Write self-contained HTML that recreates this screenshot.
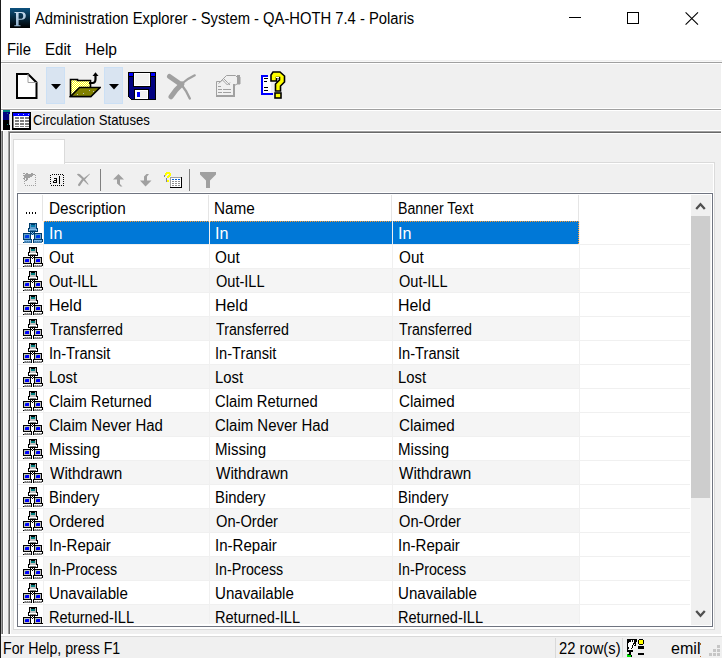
<!DOCTYPE html>
<html><head><meta charset="utf-8">
<style>
*{box-sizing:border-box}
html,body{margin:0;padding:0}
body{width:722px;height:658px;overflow:hidden;position:relative;background:#fff;font-family:"Liberation Sans",sans-serif;color:#000}
.a{position:absolute}
.t{position:absolute;white-space:nowrap;line-height:1;transform-origin:0 0}
svg{display:block}
</style></head><body>
<svg width="0" height="0" style="position:absolute"><defs><g id="net" shape-rendering="crispEdges"><rect x="6" y="0" width="8" height="1" fill="#000"/><rect x="6" y="1" width="1" height="1" fill="#000"/><rect x="7" y="1" width="1" height="1" fill="#c0c0c0"/><rect x="8" y="1" width="4" height="1" fill="#000"/><rect x="12" y="1" width="1" height="1" fill="#c0c0c0"/><rect x="13" y="1" width="1" height="1" fill="#000"/><rect x="6" y="2" width="1" height="1" fill="#000"/><rect x="7" y="2" width="1" height="1" fill="#c0c0c0"/><rect x="8" y="2" width="4" height="1" fill="#008080"/><rect x="12" y="2" width="1" height="1" fill="#c0c0c0"/><rect x="13" y="2" width="1" height="1" fill="#000"/><rect x="6" y="3" width="1" height="1" fill="#000"/><rect x="7" y="3" width="1" height="1" fill="#c0c0c0"/><rect x="8" y="3" width="4" height="1" fill="#008080"/><rect x="12" y="3" width="1" height="1" fill="#c0c0c0"/><rect x="13" y="3" width="1" height="1" fill="#000"/><rect x="6" y="4" width="1" height="1" fill="#000"/><rect x="7" y="4" width="6" height="1" fill="#c0c0c0"/><rect x="13" y="4" width="1" height="1" fill="#000"/><rect x="5" y="5" width="2" height="1" fill="#000"/><rect x="7" y="5" width="6" height="1" fill="#c0c0c0"/><rect x="13" y="5" width="2" height="1" fill="#000"/><rect x="5" y="6" width="1" height="1" fill="#000"/><rect x="6" y="6" width="8" height="1" fill="#fff"/><rect x="14" y="6" width="1" height="1" fill="#000"/><rect x="5" y="7" width="1" height="1" fill="#000"/><rect x="6" y="7" width="1" height="1" fill="#fff"/><rect x="7" y="7" width="6" height="1" fill="#808080"/><rect x="13" y="7" width="1" height="1" fill="#fff"/><rect x="14" y="7" width="1" height="1" fill="#000"/><rect x="5" y="8" width="10" height="1" fill="#000"/><rect x="7" y="9" width="1" height="1" fill="#000"/><rect x="8" y="9" width="1" height="1" fill="#fff"/><rect x="9" y="9" width="1" height="1" fill="#000"/><rect x="10" y="9" width="1" height="1" fill="#fff"/><rect x="11" y="9" width="1" height="1" fill="#000"/><rect x="0" y="10" width="9" height="1" fill="#000"/><rect x="9" y="10" width="1" height="1" fill="#fff"/><rect x="10" y="10" width="9" height="1" fill="#000"/><rect x="0" y="11" width="1" height="1" fill="#000"/><rect x="1" y="11" width="6" height="1" fill="#c0c0c0"/><rect x="7" y="11" width="1" height="1" fill="#000"/><rect x="8" y="11" width="1" height="1" fill="#fff"/><rect x="9" y="11" width="1" height="1" fill="#000"/><rect x="10" y="11" width="1" height="1" fill="#fff"/><rect x="11" y="11" width="1" height="1" fill="#000"/><rect x="12" y="11" width="6" height="1" fill="#c0c0c0"/><rect x="18" y="11" width="1" height="1" fill="#000"/><rect x="0" y="12" width="1" height="1" fill="#000"/><rect x="1" y="12" width="1" height="1" fill="#c0c0c0"/><rect x="2" y="12" width="1" height="1" fill="#008080"/><rect x="3" y="12" width="3" height="1" fill="#0000ff"/><rect x="6" y="12" width="1" height="1" fill="#c0c0c0"/><rect x="7" y="12" width="1" height="1" fill="#000"/><rect x="11" y="12" width="1" height="1" fill="#000"/><rect x="12" y="12" width="1" height="1" fill="#c0c0c0"/><rect x="13" y="12" width="1" height="1" fill="#008080"/><rect x="14" y="12" width="3" height="1" fill="#0000ff"/><rect x="17" y="12" width="1" height="1" fill="#c0c0c0"/><rect x="18" y="12" width="1" height="1" fill="#000"/><rect x="0" y="13" width="1" height="1" fill="#000"/><rect x="1" y="13" width="1" height="1" fill="#c0c0c0"/><rect x="2" y="13" width="4" height="1" fill="#0000ff"/><rect x="6" y="13" width="1" height="1" fill="#c0c0c0"/><rect x="7" y="13" width="1" height="1" fill="#000"/><rect x="11" y="13" width="1" height="1" fill="#000"/><rect x="12" y="13" width="1" height="1" fill="#c0c0c0"/><rect x="13" y="13" width="4" height="1" fill="#0000ff"/><rect x="17" y="13" width="1" height="1" fill="#c0c0c0"/><rect x="18" y="13" width="1" height="1" fill="#000"/><rect x="0" y="14" width="1" height="1" fill="#000"/><rect x="1" y="14" width="1" height="1" fill="#c0c0c0"/><rect x="2" y="14" width="4" height="1" fill="#0000ff"/><rect x="6" y="14" width="1" height="1" fill="#c0c0c0"/><rect x="7" y="14" width="1" height="1" fill="#000"/><rect x="11" y="14" width="1" height="1" fill="#000"/><rect x="12" y="14" width="1" height="1" fill="#c0c0c0"/><rect x="13" y="14" width="4" height="1" fill="#0000ff"/><rect x="17" y="14" width="1" height="1" fill="#c0c0c0"/><rect x="18" y="14" width="1" height="1" fill="#000"/><rect x="0" y="15" width="1" height="1" fill="#000"/><rect x="1" y="15" width="6" height="1" fill="#c0c0c0"/><rect x="7" y="15" width="1" height="1" fill="#000"/><rect x="11" y="15" width="1" height="1" fill="#000"/><rect x="12" y="15" width="6" height="1" fill="#c0c0c0"/><rect x="18" y="15" width="1" height="1" fill="#000"/><rect x="0" y="16" width="9" height="1" fill="#000"/><rect x="10" y="16" width="10" height="1" fill="#000"/><rect x="1" y="17" width="7" height="1" fill="#fff"/><rect x="8" y="17" width="1" height="1" fill="#000"/><rect x="10" y="17" width="1" height="1" fill="#000"/><rect x="11" y="17" width="8" height="1" fill="#fff"/><rect x="19" y="17" width="1" height="1" fill="#000"/><rect x="1" y="18" width="1" height="1" fill="#c0c0c0"/><rect x="2" y="18" width="1" height="1" fill="#808080"/><rect x="3" y="18" width="1" height="1" fill="#c0c0c0"/><rect x="4" y="18" width="1" height="1" fill="#808080"/><rect x="5" y="18" width="1" height="1" fill="#c0c0c0"/><rect x="6" y="18" width="1" height="1" fill="#808080"/><rect x="7" y="18" width="1" height="1" fill="#c0c0c0"/><rect x="8" y="18" width="1" height="1" fill="#000"/><rect x="10" y="18" width="1" height="1" fill="#000"/><rect x="11" y="18" width="1" height="1" fill="#c0c0c0"/><rect x="12" y="18" width="1" height="1" fill="#808080"/><rect x="13" y="18" width="1" height="1" fill="#c0c0c0"/><rect x="14" y="18" width="1" height="1" fill="#808080"/><rect x="15" y="18" width="1" height="1" fill="#c0c0c0"/><rect x="16" y="18" width="1" height="1" fill="#808080"/><rect x="17" y="18" width="1" height="1" fill="#c0c0c0"/><rect x="18" y="18" width="1" height="1" fill="#808080"/><rect x="19" y="18" width="1" height="1" fill="#000"/><rect x="0" y="19" width="1" height="1" fill="#000"/><rect x="1" y="19" width="7" height="1" fill="#808080"/><rect x="8" y="19" width="1" height="1" fill="#000"/><rect x="10" y="19" width="1" height="1" fill="#000"/><rect x="11" y="19" width="8" height="1" fill="#808080"/></g></defs></svg>
<div class="a" style="left:0px;top:0px;width:1px;height:658px;background:#1a1a1a"></div>
<svg class="a" style="left:10px;top:8px" width="20" height="20" viewBox="0 0 20 20"><defs><linearGradient id="pg" x1="0" y1="0" x2="0" y2="1"><stop offset="0" stop-color="#0d527f"/><stop offset="1" stop-color="#000"/></linearGradient><linearGradient id="pl" x1="0" y1="0" x2="0" y2="1"><stop offset="0" stop-color="#c8dcef"/><stop offset="1" stop-color="#8fb0cc"/></linearGradient></defs><rect width="20" height="20" fill="url(#pg)"/><path d="M4.5 4H11.5C14.5 4 15.8 5.5 15.8 7.8C15.8 10.2 14.2 11.8 11.3 11.8H8.6V17.2H10.5V18.2H4.3V17.2H6V5H4.5Z M8.6 5V10.8H10.8C12.5 10.8 13.2 9.6 13.2 7.9C13.2 6.2 12.5 5 10.8 5Z" fill="url(#pl)" fill-rule="evenodd"/></svg>
<div class="t" style="left:35.17px;top:11px;font-size:16px;color:#000;transform:scaleX(0.9228);">Administration Explorer - System - QA-HOTH 7.4 - Polaris</div>
<div class="a" style="left:569px;top:17px;width:12px;height:1px;background:#000"></div>
<div class="a" style="left:627px;top:12px;width:12px;height:12px;border:1px solid #000"></div>
<svg class="a" style="left:685px;top:12px" width="14" height="13" viewBox="0 0 14 13"><path d="M0.6 0.4L13 12.6M13 0.4L0.6 12.6" stroke="#000" stroke-width="1.1" fill="none"/></svg>
<div class="t" style="left:7.38px;top:42px;font-size:16px;color:#000;transform:scaleX(0.9260);">File</div>
<div class="t" style="left:44.66px;top:42px;font-size:16px;color:#000;transform:scaleX(0.9449);">Edit</div>
<div class="t" style="left:84.82px;top:42px;font-size:16px;color:#000;transform:scaleX(0.9734);">Help</div>
<div class="a" style="left:2px;top:60px;width:720px;height:1px;background:#f0f0f0"></div>
<div class="a" style="left:2px;top:61px;width:720px;height:1px;background:#f8f8f8"></div>
<div class="a" style="left:1px;top:62px;width:721px;height:1px;background:#a0a0a0"></div>
<div class="a" style="left:1px;top:63px;width:721px;height:1px;background:#fff"></div>
<div class="a" style="left:2px;top:64px;width:720px;height:44px;background:#f0f0f0"></div>
<div class="a" style="left:1px;top:64px;width:1px;height:45px;background:#fff"></div>
<div class="a" style="left:1px;top:108px;width:721px;height:1px;background:#fff"></div>
<div class="a" style="left:1px;top:109px;width:721px;height:1px;background:#a0a0a0"></div>
<svg class="a" style="left:16px;top:73px" width="22" height="26" viewBox="0 0 22 26" shape-rendering="crispEdges"><path d="M1 1H12L20.5 9.5V25H1Z" fill="#fff" stroke="#000" stroke-width="2" shape-rendering="geometricPrecision"/><path d="M12 1V9.5H20.5" fill="none" stroke="#a0a0a0" stroke-width="1" shape-rendering="geometricPrecision"/></svg>
<div class="a" style="left:46px;top:67px;width:19px;height:37px;background:#d9e4f1;border:1px solid #cce0f5"></div>
<svg class="a" style="left:51px;top:84px" width="10" height="6" viewBox="0 0 10 6"><path d="M0 0H10L5 5.5Z" fill="#000"/></svg>
<div class="a" style="left:104px;top:67px;width:19px;height:37px;background:#d9e4f1;border:1px solid #cce0f5"></div>
<svg class="a" style="left:109px;top:84px" width="10" height="6" viewBox="0 0 10 6"><path d="M0 0H10L5 5.5Z" fill="#000"/></svg>
<svg class="a" style="left:69px;top:71px" width="32" height="27" viewBox="0 0 32 27" shape-rendering="crispEdges"><defs><pattern id="chk" width="2" height="2" patternUnits="userSpaceOnUse"><rect width="2" height="2" fill="#ffff00"/><rect width="1" height="1" fill="#fff"/><rect x="1" y="1" width="1" height="1" fill="#fff"/></pattern></defs><path d="M1.5 25.5V8.5H8.5V9.5H21.5V25.5Z" fill="url(#chk)" stroke="#000" stroke-width="1.6" shape-rendering="geometricPrecision"/><path d="M1.5 25.5L10.5 16.5H31L22 25.5Z" fill="#808000" stroke="#000" stroke-width="1.6" shape-rendering="geometricPrecision"/><path d="M20 12H23.5Q26.5 12 26.5 8V3" fill="none" stroke="#000" stroke-width="2.2" shape-rendering="geometricPrecision"/><path d="M23.5 5L26.5 1.2L29.5 5Z" fill="#000" shape-rendering="geometricPrecision"/><rect x="14" y="22" width="1" height="1" fill="#c0c0c0"/><rect x="20" y="19" width="1" height="1" fill="#c0c0c0"/><rect x="8" y="23" width="1" height="1" fill="#c0c0c0"/><rect x="24" y="20" width="1" height="1" fill="#c0c0c0"/></svg>
<svg class="a" style="left:128px;top:72px" width="28" height="28" viewBox="0 0 28 28" shape-rendering="crispEdges"><path d="M0 0H28V28H3L0 25Z" fill="#000"/><path d="M1 1H27V27H3.5L1 24.5Z" fill="#000080"/><rect x="1" y="1" width="4" height="3" fill="#0000ff"/><rect x="23" y="1" width="4" height="3" fill="#0000ff"/><rect x="1" y="4" width="4" height="1" fill="#000"/><rect x="23" y="4" width="4" height="1" fill="#000"/><rect x="5" y="1" width="18" height="14" fill="#000"/><rect x="6" y="1" width="16" height="13" fill="#fff"/><rect x="7" y="2" width="14" height="11" fill="#f0f0f0"/><rect x="6" y="17" width="15" height="11" fill="#000"/><rect x="7" y="18" width="13" height="9" fill="#fff"/><rect x="9" y="20" width="3" height="5" fill="#0000ff"/><rect x="12" y="19" width="7" height="7" fill="#f0f0f0"/></svg>
<svg class="a" style="left:160px;top:68px" width="40" height="36" viewBox="160 68 40 36" fill="none" stroke="#a0a0a0" stroke-linecap="round"><path d="M169.5 76.5L181 84.5" stroke-width="5"/><path d="M181 84L186 91L189.8 98.5" stroke-width="2.4"/><path d="M194.8 75.3L188 79L181.5 84" stroke-width="2.2"/><path d="M182 84L176 90L171 96.8" stroke-width="5"/></svg>
<svg class="a" style="left:215px;top:74px" width="26" height="24" viewBox="0 0 26 24" shape-rendering="crispEdges"><path d="M1.5 7.5H5.5L11.5 1.5H20.5L22 3H25V10H22L19.5 11.5H18.5V22.5H1.5Z" fill="#f0f0f0" stroke="#a0a0a0" stroke-width="1" shape-rendering="geometricPrecision"/><rect x="18" y="10" width="2" height="13" fill="#a0a0a0"/><rect x="1" y="21" width="19" height="2" fill="#a0a0a0"/><rect x="22" y="1" width="3" height="9" fill="#a0a0a0"/><path d="M3.5 9.5L7.5 6L10 8.5L12.5 11L15 8.5M9 5L12.5 8.5L15 11" fill="none" stroke="#a0a0a0" stroke-width="1" shape-rendering="geometricPrecision"/><rect x="3" y="12" width="3" height="1" fill="#a0a0a0"/><rect x="3" y="15" width="4" height="1" fill="#a0a0a0"/><rect x="8" y="15" width="8" height="1" fill="#a0a0a0"/><rect x="3" y="18" width="4" height="1" fill="#a0a0a0"/><rect x="8" y="18" width="8" height="1" fill="#a0a0a0"/></svg>
<svg class="a" style="left:260px;top:71px" width="28" height="29" viewBox="0 0 28 29" shape-rendering="crispEdges"><rect x="1" y="4" width="2" height="20" fill="#0000ff"/><rect x="1" y="4" width="7" height="2" fill="#0000ff"/><rect x="1" y="22" width="12" height="2" fill="#0000ff"/><rect x="3" y="6" width="8" height="16" fill="#fff"/><rect x="4" y="7" width="4" height="1" fill="#000"/><rect x="4" y="10" width="3" height="1" fill="#000"/><rect x="4" y="16" width="4" height="1" fill="#000"/><rect x="4" y="19" width="4" height="1" fill="#000"/><path d="M13 1H20L24.5 5V11L20.5 15V20H15.5V13L19.5 9V6.5H16.5V10H11V4Z" fill="#ffff00" stroke="#000" stroke-width="1.6" shape-rendering="geometricPrecision"/><path d="M16 7L19 6" stroke="#fff" stroke-width="1" /><rect x="15" y="22" width="6" height="5" fill="#ffff00" stroke="#000" stroke-width="1.6" shape-rendering="geometricPrecision"/></svg>
<div class="a" style="left:1px;top:110px;width:721px;height:21px;background:#f0f0f0"></div>
<div class="a" style="left:1px;top:110px;width:721px;height:1px;background:#fff"></div>
<svg class="a" style="left:3px;top:110px" width="8" height="20" viewBox="0 0 8 20" shape-rendering="crispEdges"><rect width="7" height="20" fill="#000"/><rect x="0" y="0" width="7" height="2" fill="#008080"/><rect x="0" y="2" width="7" height="8" fill="#000080"/><rect x="4" y="3" width="1" height="1" fill="#008080"/><rect x="4" y="14" width="1" height="1" fill="#008080"/><rect x="6" y="4" width="1" height="11" fill="#c0c0c0"/></svg>
<svg class="a" style="left:12px;top:112px" width="19" height="18" viewBox="0 0 19 18" shape-rendering="crispEdges"><rect width="19" height="18" fill="#000"/><rect x="1" y="1" width="17" height="3" fill="#0000ff"/><rect x="6" y="2" width="1" height="1" fill="#c0c0ff"/><rect x="11" y="2" width="1" height="1" fill="#c0c0ff"/><rect x="16" y="2" width="1" height="1" fill="#c0c0ff"/><rect x="1" y="4" width="1" height="12" fill="#808080"/><rect x="2" y="4" width="15" height="12" fill="#fff"/><rect x="3" y="5" width="4" height="2" fill="#808080"/><rect x="8" y="5" width="4" height="2" fill="#808080"/><rect x="13" y="5" width="4" height="2" fill="#808080"/><rect x="3" y="8" width="4" height="2" fill="#808080"/><rect x="8" y="8" width="4" height="2" fill="#808080"/><rect x="13" y="8" width="4" height="2" fill="#808080"/><rect x="3" y="11" width="4" height="2" fill="#808080"/><rect x="8" y="11" width="4" height="2" fill="#808080"/><rect x="13" y="11" width="4" height="2" fill="#808080"/><rect x="3" y="14" width="4" height="1" fill="#808080"/><rect x="8" y="14" width="4" height="1" fill="#808080"/><rect x="13" y="14" width="4" height="1" fill="#808080"/></svg>
<div class="t" style="left:32.63px;top:112px;font-size:15px;color:#000;transform:scaleX(0.8759);">Circulation Statuses</div>
<div class="a" style="left:1px;top:130px;width:721px;height:1px;background:#fff"></div>
<div class="a" style="left:1px;top:131px;width:721px;height:505px;background:#f0f0f0"></div>
<div class="a" style="left:1px;top:131px;width:1px;height:503px;background:#a0a0a0"></div>
<div class="a" style="left:2px;top:131px;width:1px;height:503px;background:#696969"></div>
<div class="a" style="left:3px;top:131px;width:1px;height:503px;background:#fff"></div>
<div class="a" style="left:8px;top:131px;width:713px;height:1px;background:#a0a0a0"></div>
<div class="a" style="left:8px;top:131px;width:1px;height:503px;background:#a0a0a0"></div>
<div class="a" style="left:9px;top:132px;width:712px;height:1px;background:#696969"></div>
<div class="a" style="left:9px;top:132px;width:1px;height:502px;background:#696969"></div>
<div class="a" style="left:10px;top:133px;width:711px;height:1px;background:#fff"></div>
<div class="a" style="left:10px;top:133px;width:1px;height:501px;background:#fff"></div>
<div class="a" style="left:721px;top:63px;width:1px;height:573px;background:#fff"></div>
<div class="a" style="left:13px;top:162px;width:702px;height:468px;background:#fff;border:1px solid #dadada"></div>
<div class="a" style="left:13px;top:139px;width:52px;height:25px;background:#fff;border:1px solid #dadada;border-bottom:none"></div>
<div class="a" style="left:17px;top:164px;width:696px;height:28px;background:#f0f0f0"></div>
<div class="a" style="left:100px;top:169px;width:1px;height:22px;background:#808080"></div>
<div class="a" style="left:189px;top:169px;width:1px;height:22px;background:#808080"></div>
<svg class="a" style="left:0;top:0" width="40" height="192" shape-rendering="crispEdges"><rect x="24" y="179" width="1" height="1" fill="#a0a0a0"/><rect x="24" y="181" width="1" height="1" fill="#a0a0a0"/><rect x="24" y="183" width="1" height="1" fill="#a0a0a0"/><rect x="25" y="185" width="1" height="1" fill="#a0a0a0"/><rect x="27" y="185" width="1" height="1" fill="#a0a0a0"/><rect x="29" y="185" width="1" height="1" fill="#a0a0a0"/><rect x="31" y="185" width="1" height="1" fill="#a0a0a0"/><rect x="33" y="185" width="1" height="1" fill="#a0a0a0"/><rect x="35" y="185" width="1" height="1" fill="#a0a0a0"/><rect x="35" y="175" width="1" height="1" fill="#a0a0a0"/><rect x="35" y="177" width="1" height="1" fill="#a0a0a0"/><rect x="35" y="179" width="1" height="1" fill="#a0a0a0"/><rect x="35" y="181" width="1" height="1" fill="#a0a0a0"/><rect x="35" y="183" width="1" height="1" fill="#a0a0a0"/><rect x="33" y="174" width="1" height="1" fill="#a0a0a0"/><rect x="34" y="174" width="1" height="1" fill="#a0a0a0"/><rect x="32" y="174" width="1" height="1" fill="#a0a0a0"/><path d="M23 173H25V174H26V173H28V174H31V173H33V176H32V177H30V178H28V180H27V181H25V180H26V178H25V179H23V178H24V176H23V175H25V174H23Z" fill="#a0a0a0"/></svg>
<svg class="a" style="left:0;top:0" width="70" height="192" shape-rendering="crispEdges"><rect x="52" y="174" width="1" height="1" fill="#000"/><rect x="54" y="174" width="1" height="1" fill="#000"/><rect x="56" y="174" width="1" height="1" fill="#000"/><rect x="58" y="174" width="1" height="1" fill="#000"/><rect x="60" y="174" width="1" height="1" fill="#000"/><rect x="62" y="174" width="1" height="1" fill="#000"/><rect x="50" y="175" width="1" height="1" fill="#000"/><rect x="50" y="177" width="1" height="1" fill="#000"/><rect x="50" y="179" width="1" height="1" fill="#000"/><rect x="50" y="181" width="1" height="1" fill="#000"/><rect x="50" y="183" width="1" height="1" fill="#000"/><rect x="51" y="185" width="1" height="1" fill="#000"/><rect x="53" y="185" width="1" height="1" fill="#000"/><rect x="55" y="185" width="1" height="1" fill="#000"/><rect x="57" y="185" width="1" height="1" fill="#000"/><rect x="59" y="185" width="1" height="1" fill="#000"/><rect x="61" y="185" width="1" height="1" fill="#000"/><rect x="63" y="185" width="1" height="1" fill="#000"/><rect x="63" y="175" width="1" height="1" fill="#000"/><rect x="63" y="177" width="1" height="1" fill="#000"/><rect x="63" y="179" width="1" height="1" fill="#000"/><rect x="63" y="181" width="1" height="1" fill="#000"/><rect x="63" y="183" width="1" height="1" fill="#000"/><rect x="54" y="178" width="3" height="1" fill="#000"/><rect x="56" y="179" width="1" height="4" fill="#000"/><rect x="54" y="180" width="3" height="1" fill="#000"/><rect x="53" y="181" width="1" height="2" fill="#000"/><rect x="54" y="182" width="3" height="1" fill="#000"/><rect x="59" y="176" width="1" height="8" fill="#000"/></svg>
<svg class="a" style="left:0;top:0" width="100" height="192"><path d="M77 174.5Q77 173.5 78.5 173.7L80 174.2L84 178L89.5 173.7L90 174L85 179.5L88.6 184.3L88 184.8L83.5 180.5L80 185.8Q79 186.5 78.3 185.8L78 184.5L82 179L78 175.5Z" fill="#a0a0a0"/></svg>
<svg class="a" style="left:0;top:0" width="130" height="192" shape-rendering="crispEdges"><path d="M118.5 174L124 179.5H120V184L122.5 186.5H120.5L117 183.5V179.5H113Z" fill="#a0a0a0" shape-rendering="geometricPrecision"/></svg>
<svg class="a" style="left:0;top:0" width="160" height="192"><path d="M145.5 186.5L151.5 180.5H147V176.5L149 174H146.5L144 176.5V180.5H140Z" fill="#a0a0a0"/></svg>
<svg class="a" style="left:0;top:0" width="190" height="192" shape-rendering="crispEdges"><rect x="170" y="177" width="12" height="11" fill="#000"/><rect x="170" y="177" width="11" height="10" fill="#a0a0a0"/><rect x="171" y="178" width="10" height="9" fill="#fff"/><rect x="172" y="179" width="2" height="1" fill="#0a64d8"/><rect x="175" y="179" width="2" height="1" fill="#0a64d8"/><rect x="178" y="179" width="2" height="1" fill="#0a64d8"/><rect x="172" y="181" width="2" height="1" fill="#909090"/><rect x="175" y="181" width="2" height="1" fill="#909090"/><rect x="178" y="181" width="2" height="1" fill="#909090"/><rect x="172" y="183" width="2" height="1" fill="#909090"/><rect x="175" y="183" width="2" height="1" fill="#909090"/><rect x="178" y="183" width="2" height="1" fill="#909090"/><rect x="172" y="185" width="2" height="1" fill="#909090"/><rect x="175" y="185" width="2" height="1" fill="#909090"/><rect x="178" y="185" width="2" height="1" fill="#909090"/><path d="M164 175H165V173H166V172H170V173H171V176H170V177H169V178H167V176H168V175H169V174H167V175H166V176H164Z" fill="#ffff00"/><rect x="164" y="175" width="1" height="2" fill="#8080a0"/><rect x="166" y="178" width="1" height="2" fill="#8080a0"/><rect x="167" y="180" width="2" height="2" fill="#ffff00"/><rect x="166" y="180" width="1" height="2" fill="#8080a0"/></svg>
<svg class="a" style="left:0;top:0" width="220" height="192"><path d="M200 172H216V174.5L210 180.5V188H206V180.5L200 174.5Z" fill="#a0a0a0"/></svg>
<div class="a" style="left:17px;top:193px;width:696px;height:434px;background:#fff;border:1px solid #6f7480"></div>
<div class="a" style="left:42px;top:195px;width:1px;height:26px;background:#e5e5e5"></div>
<div class="a" style="left:208px;top:195px;width:1px;height:26px;background:#e5e5e5"></div>
<div class="a" style="left:391px;top:195px;width:1px;height:26px;background:#e5e5e5"></div>
<div class="a" style="left:578px;top:195px;width:1px;height:26px;background:#e5e5e5"></div>
<div class="a" style="left:26px;top:212px;width:1px;height:2px;background:#000"></div>
<div class="a" style="left:29px;top:212px;width:1px;height:2px;background:#000"></div>
<div class="a" style="left:32px;top:212px;width:1px;height:2px;background:#000"></div>
<div class="a" style="left:35px;top:212px;width:1px;height:2px;background:#000"></div>
<div class="t" style="left:48.74px;top:201px;font-size:16px;color:#000;transform:scaleX(0.9578);">Description</div>
<div class="t" style="left:214.44px;top:201px;font-size:16px;color:#000;transform:scaleX(0.9568);">Name</div>
<div class="t" style="left:398.14px;top:201px;font-size:16px;color:#000;transform:scaleX(0.8854);">Banner Text</div>
<div class="a" style="left:18px;top:194px;width:673px;height:430px;overflow:hidden"><div class="a" style="left:-18px;top:-194px;width:722px;height:658px">
<div class="a" style="left:44px;top:221px;width:535px;height:23px;background:#0078d7"></div>
<div class="a" style="left:44px;top:221px;width:535px;height:1px;border-top:1px dotted #ff9a2e"></div>
<div class="a" style="left:578px;top:221px;width:1px;height:23px;border-left:1px dotted #ff9a2e"></div>
<svg class="a" style="left:23px;top:223px" width="20" height="20" viewBox="0 0 20 20" shape-rendering="crispEdges"><rect x="6" y="0" width="8" height="1" fill="#003c6c"/><rect x="6" y="1" width="1" height="1" fill="#003c6c"/><rect x="7" y="1" width="1" height="1" fill="#609ccc"/><rect x="8" y="1" width="4" height="1" fill="#003c6c"/><rect x="12" y="1" width="1" height="1" fill="#609ccc"/><rect x="13" y="1" width="1" height="1" fill="#003c6c"/><rect x="6" y="2" width="1" height="1" fill="#003c6c"/><rect x="7" y="2" width="1" height="1" fill="#609ccc"/><rect x="8" y="2" width="4" height="1" fill="#007cac"/><rect x="12" y="2" width="1" height="1" fill="#609ccc"/><rect x="13" y="2" width="1" height="1" fill="#003c6c"/><rect x="6" y="3" width="1" height="1" fill="#003c6c"/><rect x="7" y="3" width="1" height="1" fill="#609ccc"/><rect x="8" y="3" width="4" height="1" fill="#007cac"/><rect x="12" y="3" width="1" height="1" fill="#609ccc"/><rect x="13" y="3" width="1" height="1" fill="#003c6c"/><rect x="6" y="4" width="1" height="1" fill="#003c6c"/><rect x="7" y="4" width="6" height="1" fill="#609ccc"/><rect x="13" y="4" width="1" height="1" fill="#003c6c"/><rect x="5" y="5" width="2" height="1" fill="#003c6c"/><rect x="7" y="5" width="6" height="1" fill="#609ccc"/><rect x="13" y="5" width="2" height="1" fill="#003c6c"/><rect x="5" y="6" width="1" height="1" fill="#003c6c"/><rect x="6" y="6" width="8" height="1" fill="#80bceb"/><rect x="14" y="6" width="1" height="1" fill="#003c6c"/><rect x="5" y="7" width="1" height="1" fill="#003c6c"/><rect x="6" y="7" width="1" height="1" fill="#80bceb"/><rect x="7" y="7" width="6" height="1" fill="#407cac"/><rect x="13" y="7" width="1" height="1" fill="#80bceb"/><rect x="14" y="7" width="1" height="1" fill="#003c6c"/><rect x="5" y="8" width="10" height="1" fill="#003c6c"/><rect x="7" y="9" width="1" height="1" fill="#003c6c"/><rect x="8" y="9" width="1" height="1" fill="#80bceb"/><rect x="9" y="9" width="1" height="1" fill="#003c6c"/><rect x="10" y="9" width="1" height="1" fill="#80bceb"/><rect x="11" y="9" width="1" height="1" fill="#003c6c"/><rect x="0" y="10" width="9" height="1" fill="#003c6c"/><rect x="9" y="10" width="1" height="1" fill="#80bceb"/><rect x="10" y="10" width="9" height="1" fill="#003c6c"/><rect x="0" y="11" width="1" height="1" fill="#003c6c"/><rect x="1" y="11" width="6" height="1" fill="#609ccc"/><rect x="7" y="11" width="1" height="1" fill="#003c6c"/><rect x="8" y="11" width="1" height="1" fill="#80bceb"/><rect x="9" y="11" width="1" height="1" fill="#003c6c"/><rect x="10" y="11" width="1" height="1" fill="#80bceb"/><rect x="11" y="11" width="1" height="1" fill="#003c6c"/><rect x="12" y="11" width="6" height="1" fill="#609ccc"/><rect x="18" y="11" width="1" height="1" fill="#003c6c"/><rect x="0" y="12" width="1" height="1" fill="#003c6c"/><rect x="1" y="12" width="1" height="1" fill="#609ccc"/><rect x="2" y="12" width="1" height="1" fill="#007cac"/><rect x="3" y="12" width="3" height="1" fill="#003ceb"/><rect x="6" y="12" width="1" height="1" fill="#609ccc"/><rect x="7" y="12" width="1" height="1" fill="#003c6c"/><rect x="11" y="12" width="1" height="1" fill="#003c6c"/><rect x="12" y="12" width="1" height="1" fill="#609ccc"/><rect x="13" y="12" width="1" height="1" fill="#007cac"/><rect x="14" y="12" width="3" height="1" fill="#003ceb"/><rect x="17" y="12" width="1" height="1" fill="#609ccc"/><rect x="18" y="12" width="1" height="1" fill="#003c6c"/><rect x="0" y="13" width="1" height="1" fill="#003c6c"/><rect x="1" y="13" width="1" height="1" fill="#609ccc"/><rect x="2" y="13" width="4" height="1" fill="#003ceb"/><rect x="6" y="13" width="1" height="1" fill="#609ccc"/><rect x="7" y="13" width="1" height="1" fill="#003c6c"/><rect x="11" y="13" width="1" height="1" fill="#003c6c"/><rect x="12" y="13" width="1" height="1" fill="#609ccc"/><rect x="13" y="13" width="4" height="1" fill="#003ceb"/><rect x="17" y="13" width="1" height="1" fill="#609ccc"/><rect x="18" y="13" width="1" height="1" fill="#003c6c"/><rect x="0" y="14" width="1" height="1" fill="#003c6c"/><rect x="1" y="14" width="1" height="1" fill="#609ccc"/><rect x="2" y="14" width="4" height="1" fill="#003ceb"/><rect x="6" y="14" width="1" height="1" fill="#609ccc"/><rect x="7" y="14" width="1" height="1" fill="#003c6c"/><rect x="11" y="14" width="1" height="1" fill="#003c6c"/><rect x="12" y="14" width="1" height="1" fill="#609ccc"/><rect x="13" y="14" width="4" height="1" fill="#003ceb"/><rect x="17" y="14" width="1" height="1" fill="#609ccc"/><rect x="18" y="14" width="1" height="1" fill="#003c6c"/><rect x="0" y="15" width="1" height="1" fill="#003c6c"/><rect x="1" y="15" width="6" height="1" fill="#609ccc"/><rect x="7" y="15" width="1" height="1" fill="#003c6c"/><rect x="11" y="15" width="1" height="1" fill="#003c6c"/><rect x="12" y="15" width="6" height="1" fill="#609ccc"/><rect x="18" y="15" width="1" height="1" fill="#003c6c"/><rect x="0" y="16" width="9" height="1" fill="#003c6c"/><rect x="10" y="16" width="10" height="1" fill="#003c6c"/><rect x="1" y="17" width="7" height="1" fill="#80bceb"/><rect x="8" y="17" width="1" height="1" fill="#003c6c"/><rect x="10" y="17" width="1" height="1" fill="#003c6c"/><rect x="11" y="17" width="8" height="1" fill="#80bceb"/><rect x="19" y="17" width="1" height="1" fill="#003c6c"/><rect x="1" y="18" width="1" height="1" fill="#609ccc"/><rect x="2" y="18" width="1" height="1" fill="#407cac"/><rect x="3" y="18" width="1" height="1" fill="#609ccc"/><rect x="4" y="18" width="1" height="1" fill="#407cac"/><rect x="5" y="18" width="1" height="1" fill="#609ccc"/><rect x="6" y="18" width="1" height="1" fill="#407cac"/><rect x="7" y="18" width="1" height="1" fill="#609ccc"/><rect x="8" y="18" width="1" height="1" fill="#003c6c"/><rect x="10" y="18" width="1" height="1" fill="#003c6c"/><rect x="11" y="18" width="1" height="1" fill="#609ccc"/><rect x="12" y="18" width="1" height="1" fill="#407cac"/><rect x="13" y="18" width="1" height="1" fill="#609ccc"/><rect x="14" y="18" width="1" height="1" fill="#407cac"/><rect x="15" y="18" width="1" height="1" fill="#609ccc"/><rect x="16" y="18" width="1" height="1" fill="#407cac"/><rect x="17" y="18" width="1" height="1" fill="#609ccc"/><rect x="18" y="18" width="1" height="1" fill="#407cac"/><rect x="19" y="18" width="1" height="1" fill="#003c6c"/><rect x="0" y="19" width="1" height="1" fill="#003c6c"/><rect x="1" y="19" width="7" height="1" fill="#407cac"/><rect x="8" y="19" width="1" height="1" fill="#003c6c"/><rect x="10" y="19" width="1" height="1" fill="#003c6c"/><rect x="11" y="19" width="8" height="1" fill="#407cac"/></svg>
<div class="t" style="left:48.51px;top:226px;font-size:16px;color:#fff;transform:scaleX(1.0066);">In</div>
<div class="t" style="left:214.71px;top:226px;font-size:16px;color:#fff;transform:scaleX(1.0066);">In</div>
<div class="t" style="left:398.01px;top:226px;font-size:16px;color:#fff;transform:scaleX(1.0066);">In</div>
<div class="a" style="left:18px;top:244px;width:672px;height:1px;background:#f0f0f0"></div>
<svg class="a" style="left:23px;top:247px" width="20" height="20" viewBox="0 0 20 20" shape-rendering="crispEdges"><use href="#net"/></svg>
<div class="t" style="left:49.28px;top:250px;font-size:16px;color:#000;transform:scaleX(0.9553);">Out</div>
<div class="t" style="left:215.48px;top:250px;font-size:16px;color:#000;transform:scaleX(0.9553);">Out</div>
<div class="t" style="left:398.78px;top:250px;font-size:16px;color:#000;transform:scaleX(0.9553);">Out</div>
<div class="a" style="left:43px;top:268px;width:536px;height:24px;background:#f5f5f5"></div>
<div class="a" style="left:18px;top:268px;width:672px;height:1px;background:#f0f0f0"></div>
<svg class="a" style="left:23px;top:271px" width="20" height="20" viewBox="0 0 20 20" shape-rendering="crispEdges"><use href="#net"/></svg>
<div class="t" style="left:49.31px;top:274px;font-size:16px;color:#000;transform:scaleX(0.9103);">Out-ILL</div>
<div class="t" style="left:215.51px;top:274px;font-size:16px;color:#000;transform:scaleX(0.9103);">Out-ILL</div>
<div class="t" style="left:398.81px;top:274px;font-size:16px;color:#000;transform:scaleX(0.9103);">Out-ILL</div>
<div class="a" style="left:18px;top:292px;width:672px;height:1px;background:#f0f0f0"></div>
<svg class="a" style="left:23px;top:295px" width="20" height="20" viewBox="0 0 20 20" shape-rendering="crispEdges"><use href="#net"/></svg>
<div class="t" style="left:48.69px;top:298px;font-size:16px;color:#000;transform:scaleX(0.9947);">Held</div>
<div class="t" style="left:214.89px;top:298px;font-size:16px;color:#000;transform:scaleX(0.9947);">Held</div>
<div class="t" style="left:398.19px;top:298px;font-size:16px;color:#000;transform:scaleX(0.9947);">Held</div>
<div class="a" style="left:43px;top:316px;width:536px;height:24px;background:#f5f5f5"></div>
<div class="a" style="left:18px;top:316px;width:672px;height:1px;background:#f0f0f0"></div>
<svg class="a" style="left:23px;top:319px" width="20" height="20" viewBox="0 0 20 20" shape-rendering="crispEdges"><use href="#net"/></svg>
<div class="t" style="left:49.68px;top:322px;font-size:16px;color:#000;transform:scaleX(0.8880);">Transferred</div>
<div class="t" style="left:215.88px;top:322px;font-size:16px;color:#000;transform:scaleX(0.8880);">Transferred</div>
<div class="t" style="left:399.18px;top:322px;font-size:16px;color:#000;transform:scaleX(0.8880);">Transferred</div>
<div class="a" style="left:18px;top:340px;width:672px;height:1px;background:#f0f0f0"></div>
<svg class="a" style="left:23px;top:343px" width="20" height="20" viewBox="0 0 20 20" shape-rendering="crispEdges"><use href="#net"/></svg>
<div class="t" style="left:48.65px;top:346px;font-size:16px;color:#000;transform:scaleX(0.9155);">In-Transit</div>
<div class="t" style="left:214.85px;top:346px;font-size:16px;color:#000;transform:scaleX(0.9155);">In-Transit</div>
<div class="t" style="left:398.15px;top:346px;font-size:16px;color:#000;transform:scaleX(0.9155);">In-Transit</div>
<div class="a" style="left:43px;top:364px;width:536px;height:24px;background:#f5f5f5"></div>
<div class="a" style="left:18px;top:364px;width:672px;height:1px;background:#f0f0f0"></div>
<svg class="a" style="left:23px;top:367px" width="20" height="20" viewBox="0 0 20 20" shape-rendering="crispEdges"><use href="#net"/></svg>
<div class="t" style="left:48.78px;top:370px;font-size:16px;color:#000;transform:scaleX(0.9267);">Lost</div>
<div class="t" style="left:214.98px;top:370px;font-size:16px;color:#000;transform:scaleX(0.9267);">Lost</div>
<div class="t" style="left:398.28px;top:370px;font-size:16px;color:#000;transform:scaleX(0.9267);">Lost</div>
<div class="a" style="left:18px;top:388px;width:672px;height:1px;background:#f0f0f0"></div>
<svg class="a" style="left:23px;top:391px" width="20" height="20" viewBox="0 0 20 20" shape-rendering="crispEdges"><use href="#net"/></svg>
<div class="t" style="left:49.25px;top:394px;font-size:16px;color:#000;transform:scaleX(0.9230);">Claim Returned</div>
<div class="t" style="left:215.45px;top:394px;font-size:16px;color:#000;transform:scaleX(0.9230);">Claim Returned</div>
<div class="t" style="left:398.73px;top:394px;font-size:16px;color:#000;transform:scaleX(0.9500);">Claimed</div>
<div class="a" style="left:43px;top:412px;width:536px;height:24px;background:#f5f5f5"></div>
<div class="a" style="left:18px;top:412px;width:672px;height:1px;background:#f0f0f0"></div>
<svg class="a" style="left:23px;top:415px" width="20" height="20" viewBox="0 0 20 20" shape-rendering="crispEdges"><use href="#net"/></svg>
<div class="t" style="left:49.24px;top:418px;font-size:16px;color:#000;transform:scaleX(0.9344);">Claim Never Had</div>
<div class="t" style="left:215.44px;top:418px;font-size:16px;color:#000;transform:scaleX(0.9344);">Claim Never Had</div>
<div class="t" style="left:398.73px;top:418px;font-size:16px;color:#000;transform:scaleX(0.9500);">Claimed</div>
<div class="a" style="left:18px;top:436px;width:672px;height:1px;background:#f0f0f0"></div>
<svg class="a" style="left:23px;top:439px" width="20" height="20" viewBox="0 0 20 20" shape-rendering="crispEdges"><use href="#net"/></svg>
<div class="t" style="left:48.77px;top:442px;font-size:16px;color:#000;transform:scaleX(0.9404);">Missing</div>
<div class="t" style="left:214.97px;top:442px;font-size:16px;color:#000;transform:scaleX(0.9404);">Missing</div>
<div class="t" style="left:398.27px;top:442px;font-size:16px;color:#000;transform:scaleX(0.9404);">Missing</div>
<div class="a" style="left:43px;top:460px;width:536px;height:24px;background:#f5f5f5"></div>
<div class="a" style="left:18px;top:460px;width:672px;height:1px;background:#f0f0f0"></div>
<svg class="a" style="left:23px;top:463px" width="20" height="20" viewBox="0 0 20 20" shape-rendering="crispEdges"><use href="#net"/></svg>
<div class="t" style="left:49.93px;top:466px;font-size:16px;color:#000;transform:scaleX(0.9548);">Withdrawn</div>
<div class="t" style="left:216.13px;top:466px;font-size:16px;color:#000;transform:scaleX(0.9548);">Withdrawn</div>
<div class="t" style="left:399.43px;top:466px;font-size:16px;color:#000;transform:scaleX(0.9548);">Withdrawn</div>
<div class="a" style="left:18px;top:484px;width:672px;height:1px;background:#f0f0f0"></div>
<svg class="a" style="left:23px;top:487px" width="20" height="20" viewBox="0 0 20 20" shape-rendering="crispEdges"><use href="#net"/></svg>
<div class="t" style="left:48.78px;top:490px;font-size:16px;color:#000;transform:scaleX(0.9299);">Bindery</div>
<div class="t" style="left:214.98px;top:490px;font-size:16px;color:#000;transform:scaleX(0.9299);">Bindery</div>
<div class="t" style="left:398.28px;top:490px;font-size:16px;color:#000;transform:scaleX(0.9299);">Bindery</div>
<div class="a" style="left:43px;top:508px;width:536px;height:24px;background:#f5f5f5"></div>
<div class="a" style="left:18px;top:508px;width:672px;height:1px;background:#f0f0f0"></div>
<svg class="a" style="left:23px;top:511px" width="20" height="20" viewBox="0 0 20 20" shape-rendering="crispEdges"><use href="#net"/></svg>
<div class="t" style="left:49.29px;top:514px;font-size:16px;color:#000;transform:scaleX(0.9419);">Ordered</div>
<div class="t" style="left:215.51px;top:514px;font-size:16px;color:#000;transform:scaleX(0.9166);">On-Order</div>
<div class="t" style="left:398.81px;top:514px;font-size:16px;color:#000;transform:scaleX(0.9166);">On-Order</div>
<div class="a" style="left:18px;top:532px;width:672px;height:1px;background:#f0f0f0"></div>
<svg class="a" style="left:23px;top:535px" width="20" height="20" viewBox="0 0 20 20" shape-rendering="crispEdges"><use href="#net"/></svg>
<div class="t" style="left:48.61px;top:538px;font-size:16px;color:#000;transform:scaleX(0.9397);">In-Repair</div>
<div class="t" style="left:214.81px;top:538px;font-size:16px;color:#000;transform:scaleX(0.9397);">In-Repair</div>
<div class="t" style="left:398.11px;top:538px;font-size:16px;color:#000;transform:scaleX(0.9397);">In-Repair</div>
<div class="a" style="left:43px;top:556px;width:536px;height:24px;background:#f5f5f5"></div>
<div class="a" style="left:18px;top:556px;width:672px;height:1px;background:#f0f0f0"></div>
<svg class="a" style="left:23px;top:559px" width="20" height="20" viewBox="0 0 20 20" shape-rendering="crispEdges"><use href="#net"/></svg>
<div class="t" style="left:48.68px;top:562px;font-size:16px;color:#000;transform:scaleX(0.8910);">In-Process</div>
<div class="t" style="left:214.88px;top:562px;font-size:16px;color:#000;transform:scaleX(0.8910);">In-Process</div>
<div class="t" style="left:398.18px;top:562px;font-size:16px;color:#000;transform:scaleX(0.8910);">In-Process</div>
<div class="a" style="left:18px;top:580px;width:672px;height:1px;background:#f0f0f0"></div>
<svg class="a" style="left:23px;top:583px" width="20" height="20" viewBox="0 0 20 20" shape-rendering="crispEdges"><use href="#net"/></svg>
<div class="t" style="left:48.84px;top:586px;font-size:16px;color:#000;transform:scaleX(0.9429);">Unavailable</div>
<div class="t" style="left:215.04px;top:586px;font-size:16px;color:#000;transform:scaleX(0.9429);">Unavailable</div>
<div class="t" style="left:398.34px;top:586px;font-size:16px;color:#000;transform:scaleX(0.9429);">Unavailable</div>
<div class="a" style="left:43px;top:604px;width:536px;height:22px;background:#f5f5f5"></div>
<div class="a" style="left:18px;top:604px;width:672px;height:1px;background:#f0f0f0"></div>
<svg class="a" style="left:23px;top:607px" width="20" height="20" viewBox="0 0 20 20" shape-rendering="crispEdges"><use href="#net"/></svg>
<div class="t" style="left:48.81px;top:610px;font-size:16px;color:#000;transform:scaleX(0.9099);">Returned-ILL</div>
<div class="t" style="left:215.01px;top:610px;font-size:16px;color:#000;transform:scaleX(0.9099);">Returned-ILL</div>
<div class="t" style="left:398.31px;top:610px;font-size:16px;color:#000;transform:scaleX(0.9099);">Returned-ILL</div>
<div class="a" style="left:43px;top:221px;width:1px;height:405px;background:#f0f0f0"></div>
<div class="a" style="left:209px;top:221px;width:1px;height:405px;background:#f0f0f0"></div>
<div class="a" style="left:392px;top:221px;width:1px;height:405px;background:#f0f0f0"></div>
<div class="a" style="left:579px;top:221px;width:1px;height:405px;background:#f0f0f0"></div>
</div></div>
<div class="a" style="left:691px;top:195px;width:20px;height:430px;background:#f0f0f0"></div>
<div class="a" style="left:691px;top:216px;width:19px;height:282px;background:#cdcdcd"></div>
<svg class="a" style="left:686px;top:190px" width="30" height="30" viewBox="686 190 30 30"><path d="M696.2 209L700.5 204.3L704.8 209" stroke="#505050" stroke-width="2.3" fill="none" stroke-linejoin="miter"/></svg>
<svg class="a" style="left:686px;top:600px" width="30" height="30" viewBox="686 600 30 30"><path d="M696.2 611L700.5 615.7L704.8 611" stroke="#505050" stroke-width="2.3" fill="none" stroke-linejoin="miter"/></svg>
<div class="a" style="left:1px;top:634px;width:721px;height:2px;background:#fff"></div>
<div class="a" style="left:1px;top:636px;width:721px;height:1px;background:#d9d9d9"></div>
<div class="a" style="left:1px;top:637px;width:721px;height:21px;background:#f0f0f0"></div>
<div class="t" style="left:3.14px;top:641px;font-size:16px;color:#000;transform:scaleX(0.8850);">For Help, press F1</div>
<div class="a" style="left:555px;top:638px;width:1px;height:20px;background:#d9d9d9"></div>
<div class="t" style="left:558.66px;top:641px;font-size:16px;color:#000;transform:scaleX(0.9232);">22 row(s)</div>
<div class="a" style="left:622px;top:638px;width:1px;height:19px;background:#d9d9d9"></div>
<svg class="a" style="left:627px;top:639px" width="17" height="18" viewBox="0 0 17 18" shape-rendering="crispEdges"><rect x="0" y="0" width="10" height="1" fill="#000"/><rect x="12" y="0" width="4" height="1" fill="#000"/><rect x="0" y="1" width="4" height="1" fill="#000"/><rect x="4" y="1" width="1" height="1" fill="#fff"/><rect x="5" y="1" width="1" height="1" fill="#000"/><rect x="6" y="1" width="1" height="1" fill="#fff"/><rect x="7" y="1" width="3" height="1" fill="#000"/><rect x="11" y="1" width="1" height="1" fill="#000"/><rect x="12" y="1" width="4" height="1" fill="#ffff00"/><rect x="16" y="1" width="1" height="1" fill="#000"/><rect x="0" y="2" width="4" height="1" fill="#000"/><rect x="4" y="2" width="1" height="1" fill="#fff"/><rect x="5" y="2" width="1" height="1" fill="#000"/><rect x="6" y="2" width="1" height="1" fill="#fff"/><rect x="7" y="2" width="3" height="1" fill="#000"/><rect x="11" y="2" width="1" height="1" fill="#000"/><rect x="12" y="2" width="4" height="1" fill="#ffff00"/><rect x="16" y="2" width="1" height="1" fill="#000"/><rect x="0" y="3" width="2" height="1" fill="#000"/><rect x="2" y="3" width="5" height="1" fill="#fff"/><rect x="7" y="3" width="2" height="1" fill="#000"/><rect x="11" y="3" width="1" height="1" fill="#000"/><rect x="12" y="3" width="4" height="1" fill="#ffff00"/><rect x="16" y="3" width="1" height="1" fill="#000"/><rect x="0" y="4" width="1" height="1" fill="#000"/><rect x="1" y="4" width="5" height="1" fill="#fff"/><rect x="6" y="4" width="3" height="1" fill="#000"/><rect x="11" y="4" width="1" height="1" fill="#000"/><rect x="12" y="4" width="4" height="1" fill="#ffff00"/><rect x="16" y="4" width="1" height="1" fill="#000"/><rect x="0" y="5" width="1" height="1" fill="#000"/><rect x="1" y="5" width="5" height="1" fill="#fff"/><rect x="6" y="5" width="1" height="1" fill="#000"/><rect x="7" y="5" width="1" height="1" fill="#fff"/><rect x="8" y="5" width="1" height="1" fill="#000"/><rect x="12" y="5" width="4" height="1" fill="#000"/><rect x="0" y="6" width="1" height="1" fill="#000"/><rect x="1" y="6" width="4" height="1" fill="#fff"/><rect x="5" y="6" width="1" height="1" fill="#000"/><rect x="6" y="6" width="1" height="1" fill="#fff"/><rect x="7" y="6" width="2" height="1" fill="#000"/><rect x="0" y="7" width="1" height="1" fill="#000"/><rect x="1" y="7" width="4" height="1" fill="#fff"/><rect x="5" y="7" width="1" height="1" fill="#000"/><rect x="6" y="7" width="2" height="1" fill="#fff"/><rect x="11" y="7" width="6" height="1" fill="#000"/><rect x="0" y="8" width="2" height="1" fill="#000"/><rect x="2" y="8" width="3" height="1" fill="#fff"/><rect x="5" y="8" width="1" height="1" fill="#000"/><rect x="6" y="8" width="1" height="1" fill="#fff"/><rect x="11" y="8" width="6" height="1" fill="#000"/><rect x="0" y="9" width="2" height="1" fill="#000"/><rect x="2" y="9" width="2" height="1" fill="#fff"/><rect x="4" y="9" width="1" height="1" fill="#000"/><rect x="5" y="9" width="1" height="1" fill="#fff"/><rect x="11" y="9" width="6" height="1" fill="#000"/><rect x="0" y="10" width="1" height="1" fill="#000"/><rect x="2" y="10" width="3" height="1" fill="#fff"/><rect x="0" y="11" width="6" height="1" fill="#000"/><rect x="0" y="12" width="6" height="1" fill="#000"/><rect x="2" y="13" width="2" height="1" fill="#000"/><rect x="2" y="14" width="2" height="1" fill="#000"/><rect x="11" y="14" width="6" height="1" fill="#000"/><rect x="0" y="15" width="1" height="1" fill="#00e000"/><rect x="1" y="15" width="3" height="1" fill="#000"/><rect x="11" y="15" width="6" height="1" fill="#000"/><rect x="0" y="16" width="4" height="1" fill="#00e000"/><rect x="4" y="16" width="1" height="1" fill="#000"/><rect x="0" y="17" width="4" height="1" fill="#00e000"/><rect x="4" y="17" width="1" height="1" fill="#000"/></svg>
<div class="t" style="left:670.92px;top:641px;font-size:16px;color:#000;transform:scaleX(1.0041);">emil</div>
<div class="a" style="left:700px;top:643px;width:1px;height:2px;background:#a06020"></div>
<div class="a" style="left:700px;top:656px;width:1px;height:1px;background:#c07030"></div>
<div class="a" style="left:717px;top:645px;width:3px;height:3px;background:#c6c6c6"></div>
<div class="a" style="left:713px;top:649px;width:3px;height:3px;background:#c6c6c6"></div>
<div class="a" style="left:717px;top:649px;width:3px;height:3px;background:#c6c6c6"></div>
<div class="a" style="left:709px;top:653px;width:3px;height:3px;background:#c6c6c6"></div>
<div class="a" style="left:713px;top:653px;width:3px;height:3px;background:#c6c6c6"></div>
<div class="a" style="left:717px;top:653px;width:3px;height:3px;background:#c6c6c6"></div>
</body></html>
